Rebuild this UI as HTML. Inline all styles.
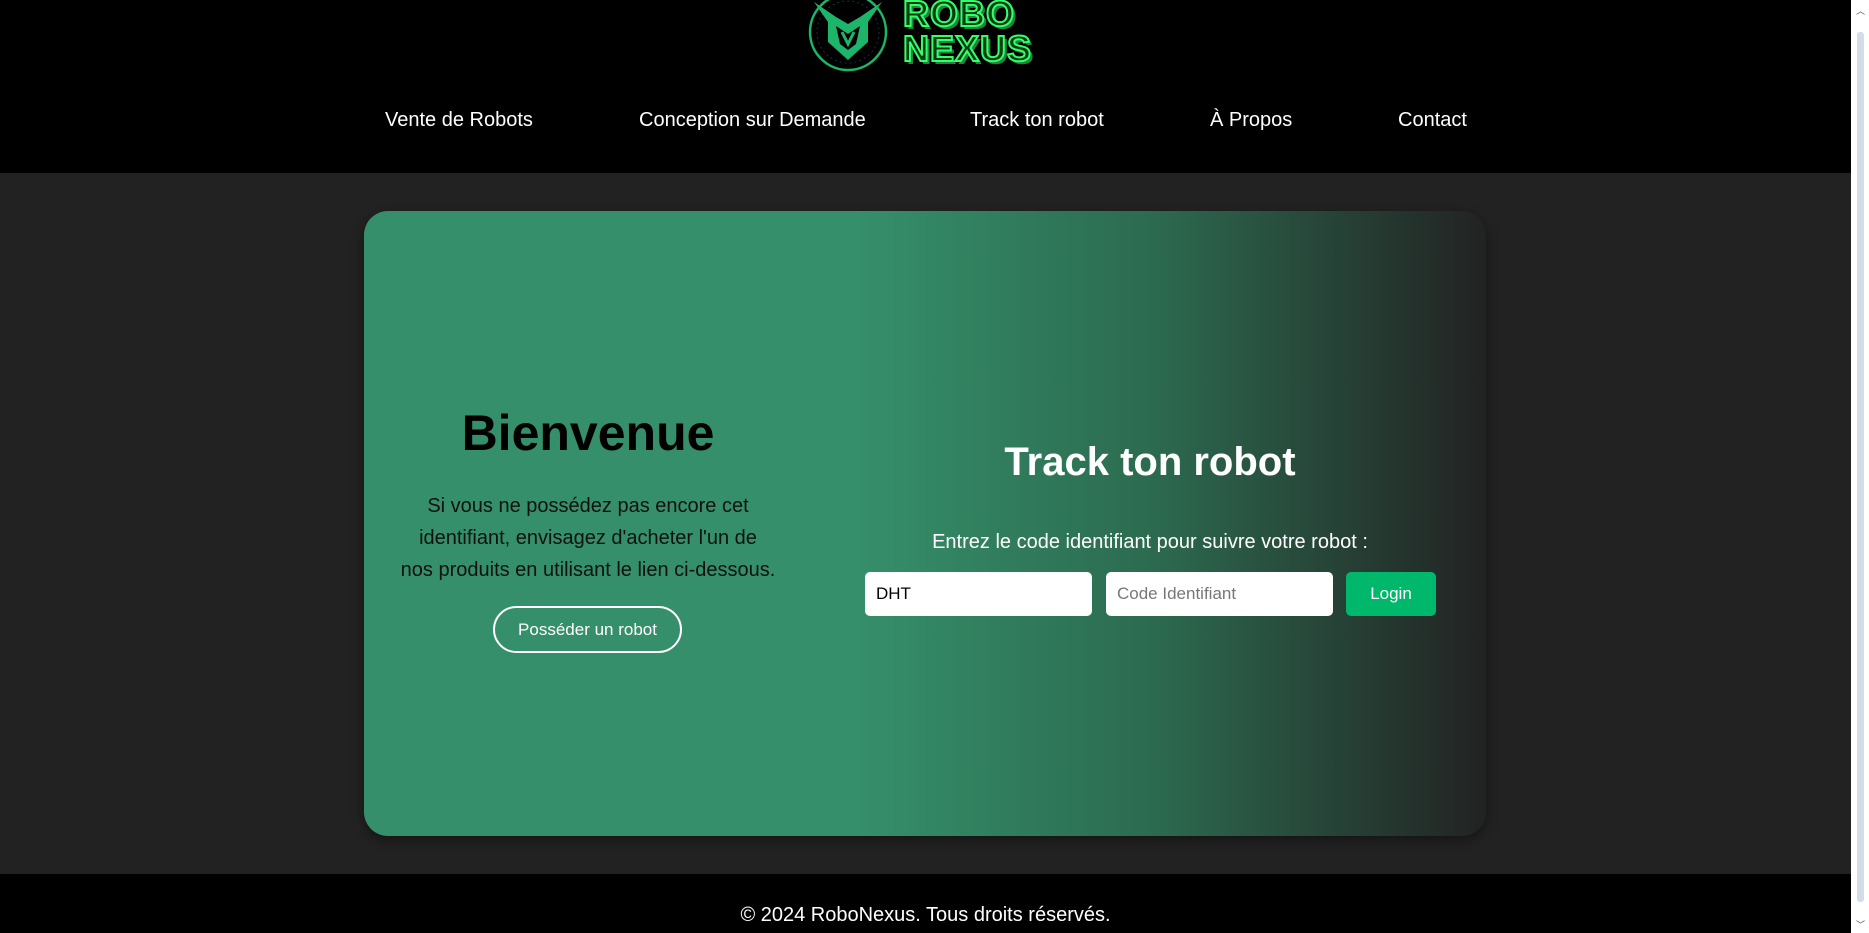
<!DOCTYPE html>
<html><head><meta charset="utf-8"><style>
*{box-sizing:border-box;margin:0;padding:0}
html,body{width:1869px;height:933px;overflow:hidden;background:#222;font-family:"Liberation Sans",Arial,sans-serif}
.header{position:absolute;left:0;top:0;width:1851px;height:173px;background:#000}
.nav a{position:absolute;top:109px;color:#fff;font-size:20px;text-decoration:none;white-space:nowrap}
.footer{position:absolute;left:0;top:874px;width:1851px;height:59px;background:#000;color:#fff;font-size:20px;text-align:center;padding-top:30px}
.card{position:absolute;left:364px;top:211px;width:1122px;height:625px;border-radius:24px;background:linear-gradient(to right,#358f6a 0%,#358f6a 44%,#2c6b50 70%,#222 100%);box-shadow:0 4px 12px rgba(0,0,0,.4)}
.sb{position:absolute;left:1851px;top:0;width:18px;height:933px;background:#fff}
.sb .th{position:absolute;left:6px;top:32px;width:7px;height:870px;background:#d3dde5;border-radius:3px}
.t{position:absolute;text-align:center}
.in{position:absolute;top:572px;width:227px;height:44px;background:#fff;border-radius:5px;font-size:17px;padding:12px 11px;line-height:20px}
</style></head><body>
<div class="header">
<svg style="position:absolute;left:806px;top:-8px" width="84" height="82" viewBox="0 0 84 82">
<circle cx="42" cy="40" r="38" fill="none" stroke="#1db56a" stroke-width="2.5"/>
<circle cx="42" cy="40" r="31" fill="none" stroke="#134" stroke-width="1" stroke-dasharray="2 3"/>
<path d="M8 10 L30 25 L42 32 L54 25 L76 10 L62 30 L62 50 L42 68 L22 50 L22 30 Z" fill="#1db56a"/>
<path d="M30 34 L42 42 L54 34 L50 52 L42 58 L34 52 Z" fill="#000"/>
<path d="M36 40 L42 52 L48 40" fill="none" stroke="#1db56a" stroke-width="3"/>
</svg>
<div style="position:absolute;left:903px;top:-4px;font-weight:bold;font-size:36px;line-height:35px;letter-spacing:1px;-webkit-text-stroke:2px #3f6;color:#0b3a18;text-shadow:3px 3px 0 #1a8a3a">ROBO<br>NEXUS</div>
<div class="nav">
<a style="left:385px">Vente de Robots</a>
<a style="left:639px">Conception sur Demande</a>
<a style="left:970px">Track ton robot</a>
<a style="left:1210px">À Propos</a>
<a style="left:1398px">Contact</a>
</div>
</div>
<div class="card"></div>
<div class="t" style="left:388px;width:400px;top:404px;font-size:50px;font-weight:bold;color:#000">Bienvenue</div>
<div class="t" style="left:378px;width:420px;top:490px;font-size:20px;line-height:32px;color:#111">Si vous ne possédez pas encore cet<br>identifiant, envisagez d'acheter l'un de<br>nos produits en utilisant le lien ci-dessous.</div>
<div class="t" style="left:493px;top:606px;width:189px;height:47px;border:2px solid #fff;border-radius:24px;color:#fff;font-size:17px;line-height:43px">Posséder un robot</div>
<div class="t" style="left:900px;width:500px;top:440px;font-size:40px;font-weight:bold;color:#fff">Track ton robot</div>
<div class="t" style="left:850px;width:600px;top:531px;font-size:20px;color:#fff">Entrez le code identifiant pour suivre votre robot :</div>
<div class="in" style="left:865px;color:#000">DHT</div>
<div class="in" style="left:1106px;color:#777">Code Identifiant</div>
<div class="t" style="left:1346px;top:572px;width:90px;height:44px;background:#00b86b;border-radius:5px;color:#fff;font-size:17px;line-height:44px">Login</div>
<div class="footer">© 2024 RoboNexus. Tous droits réservés.</div>
<div class="sb"><div class="th"></div>
<div style="position:absolute;left:5px;top:4px;font-size:9px;color:#555">︿</div>
<div style="position:absolute;left:5px;top:918px;font-size:9px;color:#555">﹀</div></div>
</body></html>
